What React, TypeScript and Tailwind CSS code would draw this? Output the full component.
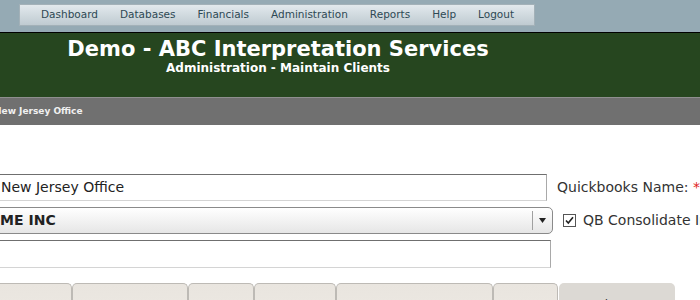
import React from "react";

const navItems = ["Dashboard", "Databases", "Financials", "Administration", "Reports", "Help", "Logout"];

const tabs: { w: number; label: string; active?: boolean }[] = [
  { w: 141, label: "General" },
  { w: 116, label: "Addresses" },
  { w: 66, label: "Billing" },
  { w: 82, label: "Defaults" },
  { w: 157, label: "Interpreter Rates" },
  { w: 65, label: "Notes" },
  { w: 116, label: "History", active: true },
];

export default function App() {
  return (
    <div
      className="w-[700px] h-[300px] overflow-hidden bg-white"
      style={{ fontFamily: '"DejaVu Sans", Verdana, sans-serif' }}
    >
      {/* top nav */}
      <div className="h-[33px] bg-[#95aab4] border-b border-black pt-[4px] pl-[19px]">
        <div className="w-[516px] h-[22px] border border-[#a3b1b8] bg-gradient-to-b from-[#e2e9ed] to-[#bfcbd1] flex items-center pl-[21px] gap-[22px] text-[10.5px] text-[#2e4954]">
          {navItems.map((n) => (
            <span key={n}>{n}</span>
          ))}
        </div>
      </div>

      {/* green header */}
      <div className="h-[65px] bg-[#26461f] border-b border-[#8f8f8f]">
        <div className="w-[556px] text-center text-white font-bold pt-[3px]">
          <div className="text-[21px] leading-[26px]">Demo - ABC Interpretation Services</div>
          <div className="text-[12px] leading-[14px] mt-[-1px]">Administration - Maintain Clients</div>
        </div>
      </div>

      {/* grey bar */}
      <div className="h-[27px] bg-[#707070] flex items-center">
        <span className="ml-[-6px] text-[9px] font-bold text-[#f0f0f0] whitespace-nowrap">
          New Jersey Office
        </span>
      </div>

      {/* form */}
      <div className="pt-[49px] flex flex-col text-[14px] text-[#222]">
        <div className="flex items-center h-[27px]">
          <div className="ml-[-3px] w-[550px] h-[27px] border border-[#a9a9a9] border-t-[#6f6f6f] border-b-[#d4d4d4] flex items-center pl-[3px] shrink-0">
            New Jersey Office
          </div>
          <span className="ml-[10px] whitespace-nowrap text-[#333]">
            Quickbooks Name: <span className="text-[#e02020]">*</span>
          </span>
        </div>

        <div className="flex items-center h-[27px] mt-[6px]">
          <div className="ml-[-25px] w-[578px] h-[27px] border border-[#8a8a8a] rounded-r-[5px] bg-gradient-to-b from-white to-[#e6e6e6] flex items-center shrink-0">
            <span className="flex-1 pl-[3px] font-bold whitespace-nowrap">ACME INC</span>
            <span className="w-[20px] h-[19px] border-l border-[#a0a0a0] flex items-center justify-center">
              <svg width="7" height="5" viewBox="0 0 7 5">
                <path d="M0 0h7L3.5 5z" fill="#222" />
              </svg>
            </span>
          </div>
          <span className="ml-[10px] w-[13px] h-[13px] border border-[#555] bg-white flex items-center justify-center shrink-0">
            <svg width="9" height="9" viewBox="0 0 9 9">
              <path d="M1 4.5l2.3 2.6L8 1.2" stroke="#222" strokeWidth="1.6" fill="none" />
            </svg>
          </span>
          <span className="ml-[7px] whitespace-nowrap text-[#333]">QB Consolidate Invoices</span>
        </div>

        <div className="flex items-center h-[28px] mt-[6px]">
          <div className="ml-[-3px] w-[554px] h-[28px] border border-[#a9a9a9] border-t-[#6f6f6f] border-b-[#d4d4d4] shrink-0" />
        </div>

        {/* tabs */}
        <div className="flex mt-[15px] ml-[-69px]">
          {tabs.map((t) => (
            <div
              key={t.label}
              className={
                "h-[30px] shrink-0 rounded-t-[5px] text-center pt-[15px] text-[12px] leading-[14px] text-[#333] whitespace-nowrap " +
                (t.active
                  ? "bg-[#dcd9d4] ml-[1px]"
                  : "bg-gradient-to-b from-[#e9e5df] to-[#ece8e2] border border-[#bdbab5] border-b-0")
              }
              style={{ width: t.w }}
            >
              {t.label}
            </div>
          ))}
        </div>
      </div>
    </div>
  );
}
